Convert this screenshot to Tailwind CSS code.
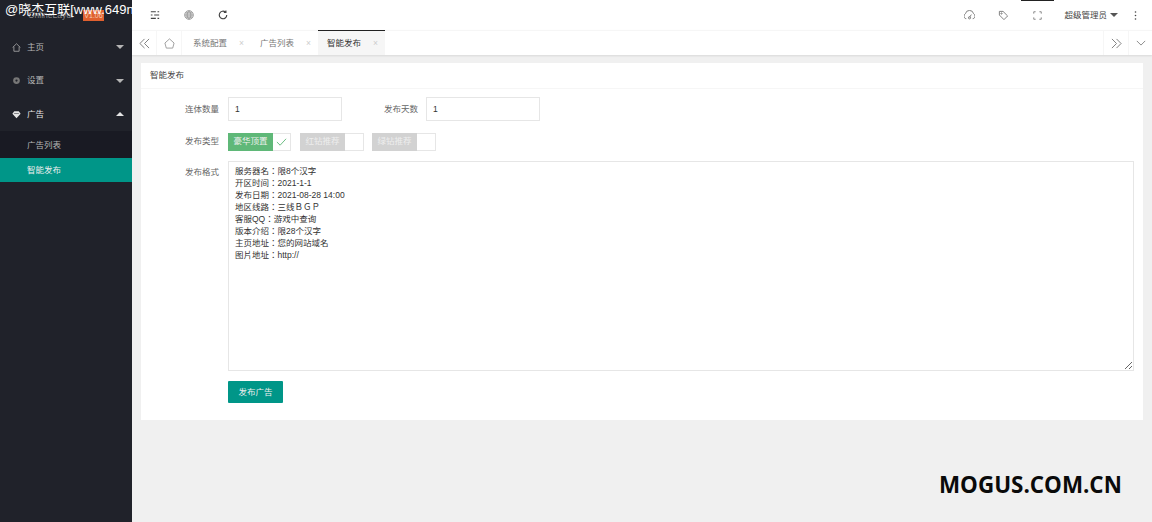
<!DOCTYPE html>
<html lang="zh-CN">
<head>
<meta charset="UTF-8">
<title>智能发布</title>
<script src="https://cdn.jsdelivr.net/npm/@tailwindcss/browser@4"></script>
</head>
<body class="h-[522px] w-[1152px] overflow-hidden bg-[#f0f0f0] font-['Liberation_Sans','Noto_Sans_CJK_SC',sans-serif] text-[8.5px] text-[#555]">
<div class="relative flex h-[522px]">

  <!-- sidebar -->
  <aside class="w-[132px] flex-none bg-[#20222a] text-[#b5b5b5]">
    <div class="flex h-[30px] items-center pl-[28px] text-[#8a8a8a]">
      <span class="w-[55px]">OnlineLayui</span>
      <span class="w-[21px] bg-[#e0602f] text-center text-[7px] leading-[11px] text-[#f5c9b0]">V1.06</span>
    </div>
    <ul>
      <li class="flex h-[34px] items-center pl-3">
        <svg class="h-[9px] w-[9px]" viewBox="0 0 12 12" fill="none" stroke="currentColor"><path d="M.8 6 6 1l5.200 5M2.500 5v6h7V5"/></svg>
        <span class="ml-[6px] flex-1">主页</span>
        <span class="mr-[8px] border-x-[4px] border-t-[4px] border-x-transparent border-t-[#b5b5b5]"></span>
      </li>
      <li class="flex h-[33px] items-center pl-3">
        <svg class="h-[9px] w-[9px] text-[#777]" viewBox="0 0 12 12" fill="currentColor"><path d="M6 1.500a4.500 4.500 0 1 0 0 9 4.500 4.500 0 0 0 0-9Zm0 3a1.500 1.500 0 1 1 0 3 1.500 1.500 0 0 1 0-3Z"/></svg>
        <span class="ml-[6px] flex-1">设置</span>
        <span class="mr-[8px] border-x-[4px] border-t-[4px] border-x-transparent border-t-[#b5b5b5]"></span>
      </li>
      <li class="flex h-[34px] items-center pl-3 text-[#e4e4e4]">
        <svg class="h-[9px] w-[9px]" viewBox="0 0 12 12" fill="currentColor"><path d="M3 1.500h6L11.500 5 6 11 .5 5 3 1.500Zm-.2 3.500h6.400v-.8H2.800Z"/></svg>
        <span class="ml-[6px] flex-1">广告</span>
        <span class="mr-[8px] border-x-[4px] border-b-[4px] border-x-transparent border-b-[#e4e4e4]"></span>
      </li>
    </ul>
    <ul class="bg-[#191a23]">
      <li class="flex h-[27px] items-center pt-[1px] pl-[27px]">广告列表</li>
      <li class="flex h-[24px] items-center bg-[#009688] pl-[27px] text-[#eee]">智能发布</li>
    </ul>
  </aside>

  <div class="flex min-w-0 flex-1 flex-col">
    <!-- top bar -->
    <header class="flex h-[30px] flex-none items-center bg-white text-[#444]">
      <svg class="ml-[18px] h-[10px] w-[10px]" viewBox="0 0 12 12" fill="none" stroke="currentColor" stroke-width="1.300"><path d="M1 2h6M9 2h2M1 6h2M5 6h6M1 10h6M9 10h2"/></svg>
      <svg class="ml-[24px] h-[10px] w-[10px] text-[#888]" viewBox="0 0 12 12" fill="#ddd" stroke="currentColor" stroke-width=".8"><circle cx="6" cy="6" r="5.300"/><path d="M1 6h10M6 1c-3 3-3 7 0 10M6 1c3 3 3 7 0 10M2 3.500h8M2 8.500h8" fill="none"/></svg>
      <svg class="ml-[24px] h-[10px] w-[10px]" viewBox="0 0 12 12" fill="none" stroke="currentColor" stroke-width="1.400"><path d="M10.500 6A4.500 4.500 0 1 1 9 2.600M9.500.5v2.500H7"/></svg>
      <div class="ml-auto flex h-full items-center">
        <svg class="h-[11px] w-[11px] text-[#777]" viewBox="0 0 12 12" fill="none" stroke="currentColor"><path d="M2.500 9.500H2a3 3 0 0 1-.4-5.500 4.500 4.500 0 0 1 8.800 0A3 3 0 0 1 10 9.500h-.5M6 8l2-3"/><circle cx="6" cy="8.500" r="1.200"/></svg>
        <svg class="ml-[23px] h-[11px] w-[11px] text-[#777]" viewBox="0 0 12 12" fill="none" stroke="currentColor"><path d="M1.500 1.500h4l5 5-4 4-5-5v-4Z"/><circle cx="3.800" cy="3.800" r=".7"/></svg>
        <div class="relative ml-[12px] flex h-full w-[33px] items-center justify-center">
          <span class="absolute top-0 left-0 h-[1px] w-[33px] bg-[#222]"></span>
          <svg class="h-[9px] w-[9px] text-[#666]" viewBox="0 0 12 12" fill="none" stroke="currentColor"><path d="M1 3.500V1h2.500M8.500 1H11v2.500M11 8.500V11H8.500M3.500 11H1V8.500"/></svg>
        </div>
        <span class="ml-[10px]">超级管理员</span>
        <span class="ml-[3px] border-x-[4px] border-t-[4px] border-x-transparent border-t-[#555]"></span>
        <svg class="mr-[15px] ml-[16px] h-[9px] w-[3px] text-[#444]" viewBox="0 0 3 9" fill="currentColor"><circle cx="1.500" cy="1" r=".8"/><circle cx="1.500" cy="4.500" r=".8"/><circle cx="1.500" cy="8" r=".8"/></svg>
      </div>
    </header>

    <!-- tabs -->
    <nav class="flex h-[25px] flex-none items-stretch border-t border-[#f6f6f6] bg-white text-[#777] shadow-[0_1px_2px_rgba(0,0,0,0.1)]">
      <div class="flex w-[25px] items-center justify-center border-r border-[#f6f6f6]">
        <svg class="h-[11px] w-[11px]" viewBox="0 0 12 12" fill="none" stroke="currentColor"><path d="M6 1 1 6l5 5M11 1 6 6l5 5"/></svg>
      </div>
      <div class="flex w-[25px] items-center justify-center border-r border-[#f6f6f6]">
        <svg class="h-[11px] w-[11px] text-[#999]" viewBox="0 0 12 12" fill="none" stroke="currentColor"><path d="M1 5.500 6 1l5 4.500-1.500 5.500h-7L1 5.500Z"/></svg>
      </div>
      <div class="flex w-[68px] items-center pl-[11px]"><span>系统配置</span><span class="ml-[12px] text-[#ccc]">×</span></div>
      <div class="flex w-[68px] items-center pl-[10px]"><span>广告列表</span><span class="ml-[12px] text-[#ccc]">×</span></div>
      <div class="relative flex w-[67px] items-center bg-[#f6f6f6] pl-[9px] text-[#333]">
        <span class="absolute -top-[1px] left-0 h-[1px] w-full bg-[#222]"></span>
        <span>智能发布</span><span class="ml-[12px] text-[#ccc]">×</span>
      </div>
      <div class="ml-auto flex w-[25px] items-center justify-center border-l border-[#f6f6f6]">
        <svg class="h-[11px] w-[11px]" viewBox="0 0 12 12" fill="none" stroke="currentColor"><path d="m1 1 5 5-5 5M6 1l5 5-5 5"/></svg>
      </div>
      <div class="flex w-[24px] items-center justify-center border-l border-[#f6f6f6]">
        <svg class="h-[10px] w-[10px]" viewBox="0 0 12 12" fill="none" stroke="currentColor"><path d="m1 3.500 5 5 5-5"/></svg>
      </div>
    </nav>

    <!-- content -->
    <main class="px-[9px] pt-[8px]">
      <section class="h-[357px] bg-white">
        <h2 class="flex h-[26px] items-center border-b border-[#f6f6f6] pl-[9px] font-normal text-[#444]">智能发布</h2>
        <form class="pt-[8px] pr-[9px]">
          <div class="flex h-[24px] items-center">
            <label class="w-[78px] text-right text-[#666]">连体数量</label>
            <input class="ml-[9px] h-[24px] w-[114px] border border-[#e6e6e6] px-[6px] text-[8.5px] text-[#333] outline-none" value="1">
            <label class="ml-[33px] w-[43px] text-right text-[#666]">发布天数</label>
            <input class="ml-[8px] h-[24px] w-[114px] border border-[#e6e6e6] px-[6px] text-[8.5px] text-[#333] outline-none" value="1">
          </div>
          <div class="mt-[11px] flex h-[19px] items-center">
            <label class="w-[78px] text-right text-[#666]">发布类型</label>
            <div class="ml-[9px] flex h-[18px] w-[63px] border-y border-r border-[#e6e6e6]">
              <span class="-my-[1px] flex w-[45px] items-center justify-center bg-[#5fb878] text-[#f0f0f0]">豪华顶置</span>
              <span class="flex flex-1 items-center justify-center">
                <svg class="h-[10px] w-[11px] text-[#5fb878]" viewBox="0 0 12 10" fill="none" stroke="currentColor"><path d="m1 5 3.500 3.500L11 1.500"/></svg>
              </span>
            </div>
            <div class="ml-[9px] flex h-[18px] w-[64px] border-y border-r border-[#e6e6e6]">
              <span class="-my-[1px] flex w-[45px] items-center justify-center bg-[#d2d2d2] text-[#eee]">红钻推荐</span>
            </div>
            <div class="ml-[8px] flex h-[18px] w-[64px] border-y border-r border-[#e6e6e6]">
              <span class="-my-[1px] flex w-[45px] items-center justify-center bg-[#d2d2d2] text-[#eee]">绿钻推荐</span>
            </div>
          </div>
          <div class="mt-[10px] flex">
            <label class="w-[78px] pt-[5px] text-right text-[#666]">发布格式</label>
            <textarea lang="zh-TW" class="ml-[9px] h-[210px] flex-1 border border-[#e6e6e6] px-[6px] py-[3px] font-['Liberation_Sans','Noto_Sans_CJK_TC',sans-serif] text-[8.5px] leading-[12px] text-[#333] outline-none">服务器名：限8个汉字
开区时间：2021-1-1
发布日期：2021-08-28 14:00
地区线路：三线ＢＧＰ
客服QQ：游戏中查询
版本介绍：限28个汉字
主页地址：您的网站域名
图片地址：http://</textarea>
          </div>
          <button type="button" class="mt-[10px] ml-[87px] h-[22px] w-[55px] rounded-[1px] bg-[#009688] text-[8.5px] text-[#eee]">发布广告</button>
        </form>
      </section>
    </main>
  </div>

  <!-- watermarks burned into the screenshot -->
  <span class="absolute top-[2px] left-[5px] text-[13px] leading-[16px] whitespace-nowrap text-white">@晓杰互联[www.649n</span>
  <span class="absolute top-[471px] left-[939px] font-['Open_Sans',sans-serif] text-[22.4px] leading-[28px] font-bold whitespace-nowrap text-[#0a0a0a]">MOGUS.COM.CN</span>
</div>
</body>
</html>
